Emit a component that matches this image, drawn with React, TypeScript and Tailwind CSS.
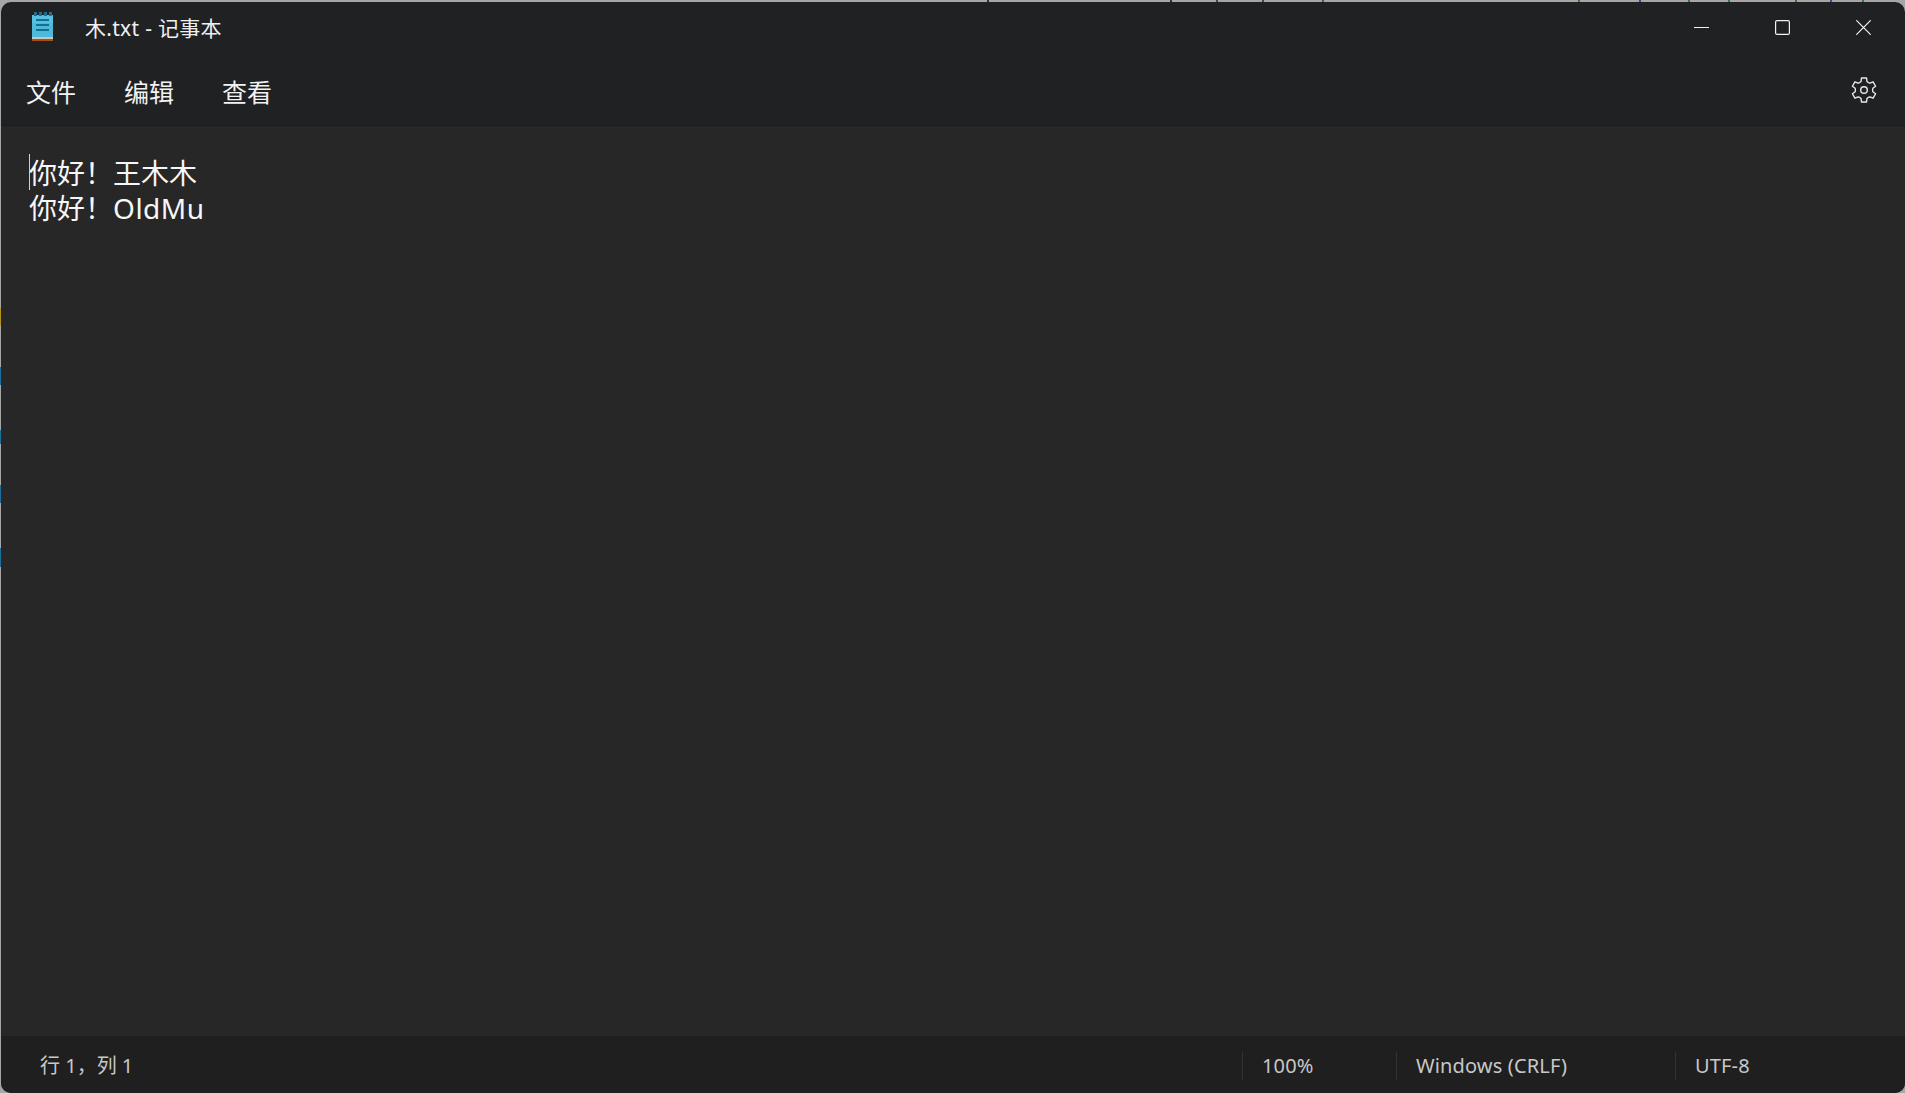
const font = { fontFamily: '"Noto Sans", "Noto Sans CJK SC", sans-serif' }

// specks of the desktop above the window's top edge
const topTicks = [
  { x: 987, color: "#333333" },
  { x: 1170, color: "#333333" },
  { x: 1216, color: "#444444" },
  { x: 1262, color: "#444444" },
  { x: 1322, color: "#555555" },
  { x: 1578, color: "#2f7a3a" },
  { x: 1639, color: "#2f4f9a" },
  { x: 1688, color: "#2f7a3a" },
  { x: 1728, color: "#2f7a3a" },
  { x: 1795, color: "#2f7a3a" },
  { x: 1830, color: "#2f4f9a" },
  { x: 1862, color: "#2f7a3a" },
]

function NotepadIcon() {
  return (
    <svg width="22" height="30" viewBox="0 0 22 30" className="shrink-0">
      <rect x="0" y="3" width="21" height="22" fill="#4fb9dc" />
      <rect x="0" y="3" width="21" height="8" fill="#5fc6e6" opacity="0.6" />
      <rect x="2" y="0" width="3" height="4" fill="#1c6f8e" />
      <rect x="7" y="0" width="3" height="4" fill="#1c6f8e" />
      <rect x="12" y="0" width="3" height="4" fill="#1c6f8e" />
      <rect x="17" y="0" width="3" height="4" fill="#1c6f8e" />
      <rect x="4" y="7" width="13" height="2" fill="#14708f" />
      <rect x="4" y="12" width="13" height="2" fill="#14708f" />
      <rect x="4" y="17" width="13" height="2" fill="#14708f" />
      <rect x="0" y="25" width="21" height="2" fill="#c9c4bd" />
      <rect x="0" y="27" width="21" height="2" fill="#a8500f" />
    </svg>
  )
}

function GearIcon() {
  // six lobes, one straight up
  const pts: string[] = []
  for (let k = 0; k < 6; k++) {
    const a = -90 + k * 60
    for (const [off, r] of [[-30, 8.6], [-19, 9], [-12, 12.2], [12, 12.2], [19, 9]] as const) {
      const t = ((a + off) * Math.PI) / 180
      pts.push(`${(13 + r * Math.cos(t)).toFixed(2)},${(13 + r * Math.sin(t)).toFixed(2)}`)
    }
  }
  return (
    <svg width="26" height="26" viewBox="0 0 26 26" className="ml-auto mt-[2px] shrink-0">
      <polygon points={pts.join(" ")} fill="none" stroke="#e8e8e8" strokeWidth="1.4" strokeLinejoin="round" />
      <circle cx="13" cy="13" r="3.3" fill="none" stroke="#e8e8e8" strokeWidth="1.4" />
    </svg>
  )
}

function StatusCell({ width, label }: { width: string; label: string }) {
  return (
    <div className={`flex items-center h-[28px] border-l border-[#333333] pl-[19px] tracking-[0.15px] ${width}`}>
      {label}
    </div>
  )
}

export default function App() {
  return (
    <div className="relative w-[1905px] h-[1093px] overflow-hidden bg-[#a6a6a6] pt-[2px] pl-[1px]" style={font}>
      {/* bits of the desktop showing behind the window */}
      <div className="absolute left-0 top-[308px] w-[1px] h-[17px] bg-[#b8901c]" />
      <div className="absolute left-0 top-[367px] w-[1px] h-[18px] bg-[#1f6f9c]" />
      <div className="absolute left-0 top-[430px] w-[1px] h-[14px] bg-[#1f6f9c]" />
      <div className="absolute left-0 top-[485px] w-[1px] h-[18px] bg-[#1f6f9c]" />
      <div className="absolute left-0 top-[548px] w-[1px] h-[19px] bg-[#1f6f9c]" />
      {topTicks.map((t) => (
        <div
          key={t.x}
          className="absolute top-0 w-[2px] h-[2px]"
          style={{ left: t.x, backgroundColor: t.color }}
        />
      ))}

      <div className="flex flex-col h-full rounded-[10px] overflow-hidden bg-[#202123] text-white">
        {/* title bar */}
        <div className="flex items-center h-[50px] shrink-0 pl-[31px] pr-[34px]">
          <NotepadIcon />
          <span className="ml-[31px] mt-[3px] text-[21px] tracking-[0.3px] text-[#f0f0f0]">木.txt - 记事本</span>
          <div className="ml-auto flex items-center gap-[66px]">
            <svg width="15" height="15" viewBox="0 0 15 15">
              <path d="M0 7.5H15" stroke="#f2f2f2" strokeWidth="1.2" />
            </svg>
            <svg width="15" height="15" viewBox="0 0 15 15">
              <rect x="0.6" y="0.6" width="13.8" height="13.8" rx="1.5" fill="none" stroke="#f2f2f2" strokeWidth="1.2" />
            </svg>
            <svg width="15" height="15" viewBox="0 0 15 15">
              <path d="M0.3 0.3L14.7 14.7M14.7 0.3L0.3 14.7" stroke="#f2f2f2" strokeWidth="1.2" />
            </svg>
          </div>
        </div>

        {/* menu bar */}
        <div className="flex items-center h-[74px] shrink-0 pl-[25px] pr-[28px] border-b border-[#1c1c1c]">
          <div className="flex items-center gap-[48px] mt-[8px] text-[25px] text-[#f2f2f2]">
            <span>文件</span>
            <span>编辑</span>
            <span>查看</span>
          </div>
          <GearIcon />
        </div>

        {/* editor */}
        <div className="relative flex-1 bg-[#272727] pl-[28px] pt-[30px] text-[28px] leading-[35px] text-[#f7f7f7]">
          <div>你好！王木木</div>
          <div>
            你好！<span className="tracking-[0.5px]">OldMu</span>
          </div>
          <div className="absolute left-[28px] top-[28px] w-[1px] h-[36px] bg-[#d0d0d0]" />
        </div>

        {/* status bar */}
        <div className="flex items-center h-[57px] shrink-0 bg-[#1f1f1f] pl-[39px] text-[20px] text-[#c8c8c8]">
          <span className="mt-[3px]">行 1，列 1</span>
          <div className="ml-auto mt-[3px] flex items-center">
            <StatusCell width="w-[154px]" label="100%" />
            <StatusCell width="w-[279px]" label="Windows (CRLF)" />
            <StatusCell width="w-[230px]" label="UTF-8" />
          </div>
        </div>
      </div>
    </div>
  )
}
